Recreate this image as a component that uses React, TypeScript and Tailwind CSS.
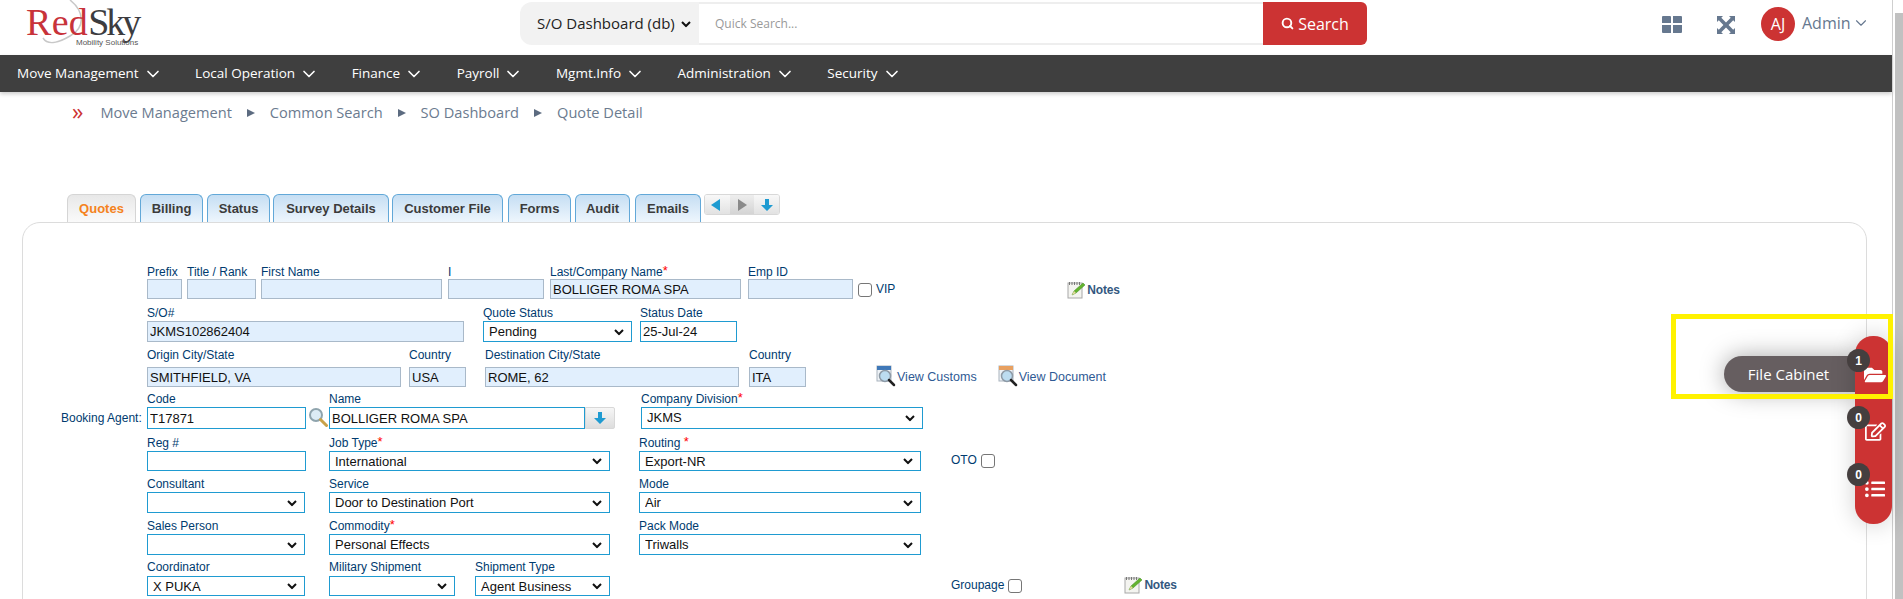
import React from "react";
import { ChevronDown, Search } from "lucide-react";
import { FaFolderOpen, FaRegEdit, FaListUl } from "react-icons/fa";

const Star = () => <span className="text-[#f00] text-[13px] leading-none align-top">*</span>;

function Label({ text, star, gap, className = "h-[16px]" }: { text: string; star?: boolean; gap?: boolean; className?: string }) {
  return (
    <div className={"text-[12px] leading-[16px] text-[#003b6f] whitespace-nowrap " + className}>
      {text}
      {star && (gap ? <span> <Star /></span> : <Star />)}
    </div>
  );
}

function Ro({ value = "", className = "h-[20px]" }: { value?: string; className?: string }) {
  return (
    <input
      readOnly
      value={value}
      className={"block w-full border border-[#a9b9c9] bg-[#e1effd] px-[2px] text-[13px] text-[#111] outline-none " + className}
    />
  );
}

function Ed({ value = "", className = "h-[20px]" }: { value?: string; className?: string }) {
  return (
    <input
      readOnly
      value={value}
      className={"block w-full border border-[#1f9bd1] bg-white px-[2px] text-[13px] text-[#111] outline-none " + className}
    />
  );
}

function Chev({ className = "right-[8px]" }: { className?: string }) {
  return (
    <svg width="10" height="7" viewBox="0 0 10 7" className={"pointer-events-none absolute top-1/2 -translate-y-1/2 " + className}>
      <path d="M1 1.500l4 4 4-4" fill="none" stroke="#111" strokeWidth="2" />
    </svg>
  );
}

function Sel({ value = "", className = "h-[21px]" }: { value?: string; className?: string }) {
  return (
    <div className="relative">
      <select
        defaultValue={value}
        className={"block w-full appearance-none border border-[#1f9bd1] bg-white pl-[5px] text-[13px] text-[#111] outline-none " + className}
      >
        <option value={value}>{value}</option>
      </select>
      <Chev />
    </div>
  );
}

function Check() {
  return <input type="checkbox" className="block h-[14px] w-[14px] shrink-0 appearance-none rounded-[3px] border border-[#767676] bg-white" />;
}

function NotesIcon() {
  return (
    <svg width="20" height="18" viewBox="0 0 20 18" className="shrink-0">
      <rect x="1" y="2" width="14" height="15" fill="#f4f4f0" stroke="#a8a8a8" />
      <path d="M2.500 1v3M5 1v3M7.500 1v3M10 1v3M12.500 1v3" stroke="#777" strokeWidth="1" />
      <path d="M5 14l2-4 9-8 2 2-9 8z" fill="#63b32e" stroke="#3d8a1c" strokeWidth=".5" />
      <path d="M5 14l2-4 2 2z" fill="#e8d9a0" />
    </svg>
  );
}

function Notes() {
  return (
    <span className="flex items-center">
      <NotesIcon />
      <span className="text-[12px] font-bold text-[#33587f] tracking-[-0.2px]">Notes</span>
    </span>
  );
}

function ViewIcon({ tint }: { tint: string }) {
  return (
    <svg width="20" height="22" viewBox="0 0 20 22" className="shrink-0">
      <rect x="1" y="1" width="14" height="15" fill="#eef2f6" stroke="#a9b3be" />
      <rect x="1" y="1" width="14" height="4" fill={tint} />
      <circle cx="9" cy="11" r="5.500" fill="#bcdcf0" stroke="#8e9aa6" strokeWidth="1.500" />
      <path d="M13 15l5 5" stroke="#222" strokeWidth="2.500" strokeLinecap="round" />
    </svg>
  );
}

function ViewLink({ tint, text }: { tint: string; text: string }) {
  return (
    <span className="flex items-center gap-[1px]">
      <ViewIcon tint={tint} />
      <span className="pt-[2px] text-[12.500px] text-[#2f5a94] whitespace-nowrap">{text}</span>
    </span>
  );
}

function Tri({ dir, color }: { dir: "l" | "r" | "d"; color: string }) {
  const d = dir === "l" ? "M10 1v12L1 7z" : dir === "r" ? "M3 1v12l9-6z" : "M5 1h4v6h4L7 13 1 7h4z";
  return (
    <svg width="14" height="14" viewBox="0 0 14 14">
      <path d={d} fill={color} />
    </svg>
  );
}

const navItems = ["Move Management", "Local Operation", "Finance", "Payroll", "Mgmt.Info", "Administration", "Security"];
const tabs: [string, string][] = [
  ["Billing", "ml-[4px] w-[63px]"],
  ["Status", "ml-[4px] w-[63px]"],
  ["Survey Details", "ml-[3px] w-[116px]"],
  ["Customer File", "ml-[3px] w-[111px]"],
  ["Forms", "ml-[5px] w-[63px]"],
  ["Audit", "ml-[4px] w-[55px]"],
  ["Emails", "ml-[5px] w-[66px]"],
];
const crumbs = ["Move Management", "Common Search", "SO Dashboard", "Quote Detail"];

function Badge({ n }: { n: number }) {
  return (
    <span className="absolute -left-[12px] -top-[12px] flex h-[23px] w-[23px] items-center justify-center rounded-full bg-[#453f3f] text-[12px] font-bold text-white">
      {n}
    </span>
  );
}

export default function App() {
  return (
    <div className="relative flex h-[599px] overflow-hidden bg-white font-['Liberation_Sans',Arial,sans-serif]">
      <div className="w-[1892px] shrink-0">
        <header className="flex h-[55px] items-start bg-white font-['Open_Sans',sans-serif]">
          <div className="relative ml-[26px] h-[55px] w-[120px] shrink-0">
            <svg width="80" height="50" viewBox="0 0 80 50" className="absolute left-0 top-0">
              <path d="M44 0C59 12 59 28 44 36 34 42 22 46 17 38" fill="none" stroke="#c8c8c8" strokeWidth="1.500" />
            </svg>
            <div className="absolute left-0 top-[7px] font-['Liberation_Serif',serif] text-[38px] leading-[31px]">
              <span className="tracking-[0.300px] text-[#c8333a]">Red</span>
              <span className="tracking-[-3px] text-[#3c3c40]">Sky</span>
            </div>
            <div className="absolute left-[50px] top-[38px] whitespace-nowrap font-['Liberation_Sans',sans-serif] text-[8px] leading-[10px] text-[#555]">Mobility Solutions</div>
          </div>
          <div className="ml-[374px] mt-[2px] flex h-[43px] w-[847px]">
            <div className="relative flex w-[179px] items-center rounded-l-[12px] bg-[#f2f2f2] pl-[17px]">
              <select defaultValue="db" className="w-[160px] appearance-none bg-transparent text-[15px] text-[#222] outline-none">
                <option value="db">S/O Dashboard (db)</option>
              </select>
              <Chev className="right-[8px]" />
            </div>
            <div className="flex flex-1 items-center border-y-2 border-[#eeeeee] pl-[16px] text-[12px] text-[#999]">Quick Search...</div>
            <div className="flex w-[104px] items-center justify-center gap-[4px] rounded-r-[6px] bg-[#cc3333] text-[16px] text-white">
              <Search size={13} strokeWidth={3.500} />
              Search
            </div>
          </div>
          <svg width="20" height="17" viewBox="0 0 20 17" className="ml-[295px] mt-[16px] shrink-0">
            <path d="M1 0h7a1 1 0 0 1 1 1v6H0V1a1 1 0 0 1 1-1zM11 0h8a1 1 0 0 1 1 1v6h-9zM0 9h9v8H1a1 1 0 0 1-1-1zM11 9h9v7a1 1 0 0 1-1 1h-8z" fill="#66788f" />
          </svg>
          <svg width="18" height="18" viewBox="0 0 18 18" className="ml-[35px] mt-[16px] shrink-0">
            <path d="M0 0h6L4.300 1.800 9 6.400 13.700 1.800 12 0h6v6l-1.800-1.700L11.600 9l4.600 4.700L18 12v6h-6l1.700-1.800L9 11.600l-4.700 4.600L6 18H0v-6l1.800 1.700L6.400 9 1.800 4.300 0 6z" fill="#66788f" />
          </svg>
          <div className="ml-[26px] mt-[7px] flex h-[34px] w-[34px] shrink-0 items-center justify-center rounded-full bg-[#cc3333] text-[16px] text-white">AJ</div>
          <div className="ml-[7px] mt-[12px] flex items-center gap-[1px] text-[16px] leading-[22px] text-[#66788f]">
            Admin
            <ChevronDown size={18} strokeWidth={1.500} />
          </div>
        </header>

        <nav className="flex h-[37px] items-center gap-[32.500px] bg-[#3f3f3f] pl-[17px] font-['Open_Sans',sans-serif] text-[13.500px] text-white shadow-[0_2px_4px_rgba(0,0,0,0.2)]">
          {navItems.map((n) => (
            <span key={n} className="flex items-center gap-[4px] whitespace-nowrap">
              {n}
              <ChevronDown size={20} strokeWidth={2} />
            </span>
          ))}
        </nav>

        <div className="flex h-[42px] items-center pl-[72px] font-['Open_Sans',sans-serif] text-[14.600px] text-[#6b7b8f]">
          <span className="mr-[17px] -mt-[3px] text-[23px] leading-none text-[#cc3333]">»</span>
          {crumbs.map((c, i) => (
            <React.Fragment key={c}>
              {i > 0 && (
                <svg width="10" height="10" viewBox="0 0 10 10" className="mx-[14px]">
                  <path d="M1 1v8l8-4z" fill="#5c6b80" />
                </svg>
              )}
              <span className="whitespace-nowrap">{c}</span>
            </React.Fragment>
          ))}
        </div>

        <div className="ml-[67px] mt-[60px] flex h-[28px] text-[13px] font-bold text-[#3b3b3b]">
          <div className="flex w-[69px] items-center justify-center rounded-t-[6px] border border-b-0 border-[#d5d5d5] bg-linear-to-b from-[#e8e8e8] to-[#fafafa] text-[#f58220]">Quotes</div>
          {tabs.map(([t, w]) => (
            <div key={t} className={"flex items-center justify-center rounded-t-[6px] border border-b-0 border-[#62a8d8] bg-linear-to-b from-[#c5def3] to-[#eef6fd] " + w}>
              {t}
            </div>
          ))}
          <div className="ml-[3px] flex h-[21px] w-[76px] items-center overflow-hidden rounded-[3px] border border-[#d8d8d8]">
            <div className="flex h-full flex-1 items-center justify-center bg-linear-to-b from-[#f8f8f8] to-[#e2e2e2]"><Tri dir="l" color="#1f9bd1" /></div>
            <div className="flex h-full flex-1 items-center justify-center bg-linear-to-b from-[#eeeeee] to-[#d4d4d4]"><Tri dir="r" color="#8a8a8a" /></div>
            <div className="flex h-full flex-1 items-center justify-center bg-linear-to-b from-[#f8f8f8] to-[#e2e2e2]"><Tri dir="d" color="#1f9bd1" /></div>
          </div>
        </div>

        <section className="ml-[22px] h-[400px] w-[1845px] rounded-t-[18px] border border-[#dcdcdc] pl-[124px] pt-[40px]">
          <div className="flex">
            <div className="w-[35px]"><Label text="Prefix" className="h-[16px] pt-[1px]" /><Ro /></div>
            <div className="ml-[5px] w-[69px]"><Label text="Title / Rank" className="h-[16px] pt-[1px]" /><Ro /></div>
            <div className="ml-[5px] w-[181px]"><Label text="First Name" className="h-[16px] pt-[1px]" /><Ro /></div>
            <div className="ml-[6px] w-[96px]"><Label text="I" className="h-[16px] pt-[1px]" /><Ro /></div>
            <div className="ml-[6px] w-[191px]"><Label text="Last/Company Name" star className="h-[16px] pt-[1px]" /><Ro value="BOLLIGER ROMA SPA" /></div>
            <div className="ml-[7px] w-[105px]"><Label text="Emp ID" className="h-[16px] pt-[1px]" /><Ro /></div>
            <div className="ml-[5px] mt-[20px] flex h-[14px] items-center gap-[4px] text-[12px] leading-[13px] text-[#003b6f]"><Check /><span className="-mt-[2px]">VIP</span></div>
            <div className="ml-[172px] mt-[18px]"><Notes /></div>
          </div>

          <div className="mt-[6px] flex">
            <div className="w-[317px]"><Label text="S/O#" /><Ro value="JKMS102862404" className="h-[21px]" /></div>
            <div className="ml-[19px] w-[149px]"><Label text="Quote Status" /><Sel value="Pending" /></div>
            <div className="ml-[8px] w-[97px]"><Label text="Status Date" /><Ed value="25-Jul-24" className="h-[21px]" /></div>
          </div>

          <div className="mt-[5px] flex">
            <div className="w-[254px]"><Label text="Origin City/State" className="h-[20px]" /><Ro value="SMITHFIELD, VA" /></div>
            <div className="ml-[8px] w-[57px]"><Label text="Country" className="h-[20px]" /><Ro value="USA" /></div>
            <div className="ml-[19px] w-[254px]"><Label text="Destination City/State" className="h-[20px]" /><Ro value="ROME, 62" /></div>
            <div className="ml-[10px] w-[57px]"><Label text="Country" className="h-[20px]" /><Ro value="ITA" /></div>
            <div className="ml-[70px] mt-[18px]"><ViewLink tint="#3f78b8" text="View Customs" /></div>
            <div className="ml-[21px] mt-[18px]"><ViewLink tint="#e8a060" text="View Document" /></div>
          </div>

          <div className="-ml-[86px] mt-[4px] flex">
            <div className="mt-[16px] w-[86px] text-[12px] leading-[22px] text-[#003b6f]">Booking Agent:</div>
            <div className="w-[159px]"><Label text="Code" /><Ed value="T17871" className="h-[22px]" /></div>
            <div className="ml-[2px] mt-[16px] w-[21px]">
              <svg width="20" height="20" viewBox="0 0 20 20">
                <circle cx="8" cy="8" r="6" fill="#dcecf5" stroke="#8fa4ad" strokeWidth="2" />
                <path d="M12.500 12.500l6 6" stroke="#c9a24a" strokeWidth="3" strokeLinecap="round" />
              </svg>
            </div>
            <div className="w-[286px]">
              <Label text="Name" />
              <div className="flex">
                <Ed value="BOLLIGER ROMA SPA" className="h-[22px]" />
                <div className="flex h-[22px] w-[30px] shrink-0 items-center justify-center rounded-r-[2px] border border-[#d8d8d8] bg-linear-to-b from-[#f6f6f6] to-[#dddddd]">
                  <Tri dir="d" color="#1f9bd1" />
                </div>
              </div>
            </div>
            <div className="ml-[26px] w-[282px]"><Label text="Company Division" star /><Sel value="JKMS" className="h-[22px]" /></div>
          </div>

          <div className="mt-[6px] flex">
            <div className="w-[159px]"><Label text="Reg #" /><Ed /></div>
            <div className="ml-[23px] w-[281px]"><Label text="Job Type" star /><Sel value="International" className="h-[20px]" /></div>
            <div className="ml-[29px] w-[282px]"><Label text="Routing" star gap /><Sel value="Export-NR" className="h-[20px]" /></div>
            <div className="ml-[30px] mt-[19px] flex h-[14px] items-center gap-[4px] text-[12px] leading-[13px] text-[#003b6f]"><span className="-mt-[1px]">OTO</span><Check /></div>
          </div>

          <div className="mt-[5px] flex">
            <div className="w-[158px]"><Label text="Consultant" /><Sel /></div>
            <div className="ml-[24px] w-[281px]"><Label text="Service" /><Sel value="Door to Destination Port" /></div>
            <div className="ml-[29px] w-[282px]"><Label text="Mode" /><Sel value="Air" /></div>
          </div>

          <div className="mt-[5px] flex">
            <div className="w-[158px]"><Label text="Sales Person" /><Sel /></div>
            <div className="ml-[24px] w-[281px]"><Label text="Commodity" star /><Sel value="Personal Effects" /></div>
            <div className="ml-[29px] w-[282px]"><Label text="Pack Mode" /><Sel value="Triwalls" /></div>
          </div>

          <div className="mt-[4px] flex">
            <div className="w-[158px]"><Label text="Coordinator" className="h-[17px]" /><Sel value="X PUKA" className="h-[20px]" /></div>
            <div className="ml-[24px] w-[126px]"><Label text="Military Shipment" className="h-[17px]" /><Sel className="h-[20px]" /></div>
            <div className="ml-[20px] w-[135px]"><Label text="Shipment Type" className="h-[17px]" /><Sel value="Agent Business" className="h-[20px]" /></div>
            <div className="ml-[341px] mt-[20px] flex h-[14px] items-center gap-[4px] text-[12px] leading-[13px] text-[#003b6f]"><span className="-mt-[1px]">Groupage</span><Check /></div>
            <div className="ml-[102px] mt-[17px]"><Notes /></div>
          </div>
        </section>
      </div>

      <div className="ml-[3px] mt-[13px] w-[8px] bg-[#c1c1c1]" />
      <div className="absolute left-[1892px] top-0 h-[599px] w-px bg-[#cfcfcf]" />

      <div className="absolute left-[1724px] top-[356px] flex h-[36px] w-[135px] items-center justify-center rounded-l-[18px] bg-[#665e60] pr-[6px] font-['Open_Sans',sans-serif] text-[15px] text-white shadow-[0_0_24px_rgba(0,0,0,0.35)]">File Cabinet</div>
      <div className="absolute left-[1855px] top-[336px] flex h-[188px] w-[37px] flex-col items-center rounded-[18px] bg-[#cc3333] pl-[3px] pt-[28px] text-white shadow-[0_0_24px_rgba(0,0,0,0.2)]">
        <FaFolderOpen size={22} className="mb-[35px]" />
        <FaRegEdit size={21} className="mb-[37px]" />
        <FaListUl size={20} />
      </div>
      <div className="absolute left-[1859px] top-[361px]"><Badge n={1} /></div>
      <div className="absolute left-[1859px] top-[418px]"><Badge n={0} /></div>
      <div className="absolute left-[1859px] top-[475px]"><Badge n={0} /></div>
      <div className="absolute left-[1671px] top-[314px] h-[85px] w-[222px] border-[5px] border-[#fff200]" />
    </div>
  );
}
